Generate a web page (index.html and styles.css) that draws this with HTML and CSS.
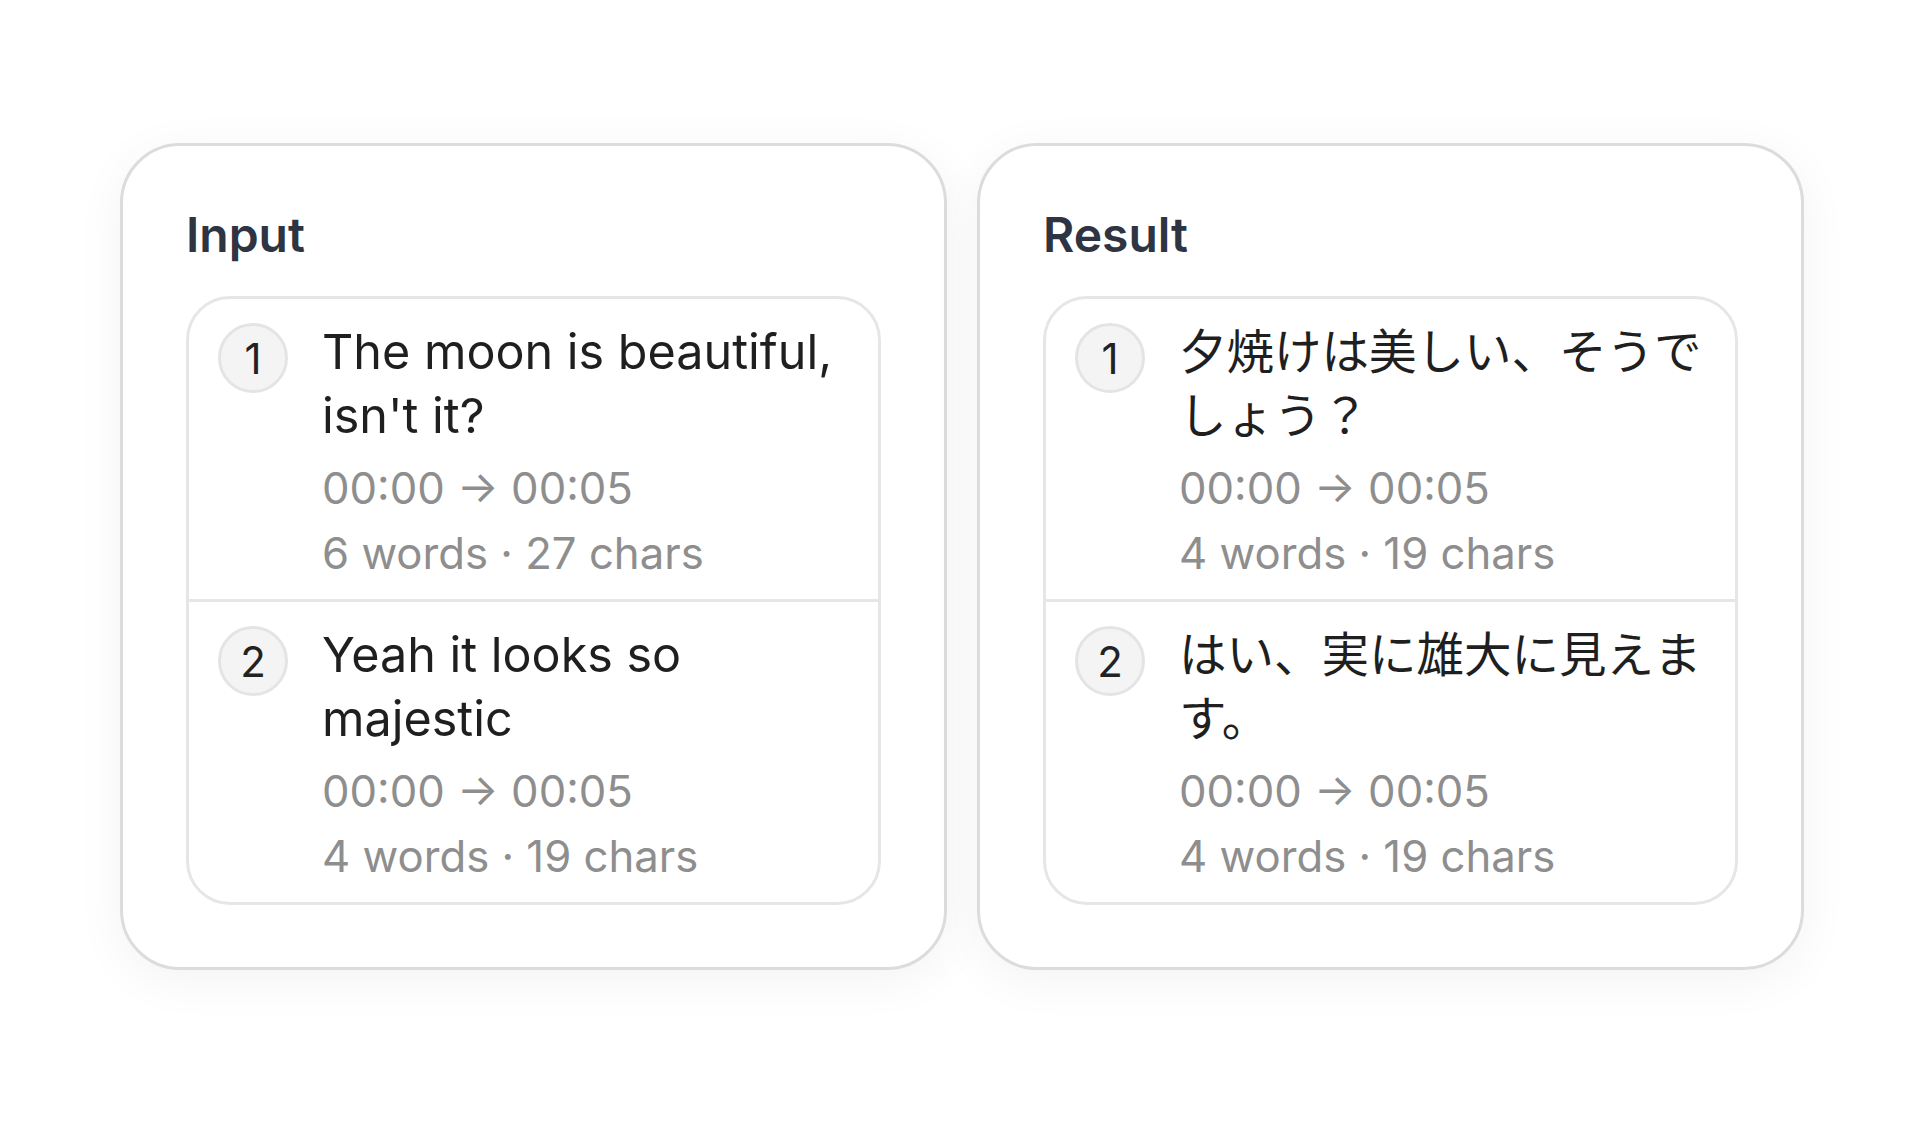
FILE: index.html
```html
<!DOCTYPE html>
<html lang="en">
<head>
<meta charset="utf-8">
<title>Input / Result</title>
<link rel="stylesheet" href="styles.css">
</head>
<body>
<main class="stage">
  <section class="card">
    <h2 class="title">Input</h2>
    <div class="list">
      <div class="row">
        <div class="badge">1</div>
        <div class="body">
          <div class="text">The moon is beautiful, isn't it?</div>
          <div class="meta">
            <div>00:00 → 00:05</div>
            <div>6 words · 27 chars</div>
          </div>
        </div>
      </div>
      <div class="row">
        <div class="badge">2</div>
        <div class="body">
          <div class="text">Yeah it looks so majestic</div>
          <div class="meta">
            <div>00:00 → 00:05</div>
            <div>4 words · 19 chars</div>
          </div>
        </div>
      </div>
    </div>
  </section>
  <section class="card">
    <h2 class="title">Result</h2>
    <div class="list">
      <div class="row">
        <div class="badge">1</div>
        <div class="body">
          <div class="text text-ja" lang="ja">夕焼けは美しい、そうでしょう？</div>
          <div class="meta">
            <div>00:00 → 00:05</div>
            <div>4 words · 19 chars</div>
          </div>
        </div>
      </div>
      <div class="row">
        <div class="badge">2</div>
        <div class="body">
          <div class="text text-ja" lang="ja">はい、実に雄大に見えます。</div>
          <div class="meta">
            <div>00:00 → 00:05</div>
            <div>4 words · 19 chars</div>
          </div>
        </div>
      </div>
    </div>
  </section>
</main>
</body>
</html>
```

FILE: styles.css
```css
html, body {
  margin: 0;
  padding: 0;
  background: #ffffff;
}

body {
  font-family: Inter, "Noto Sans CJK JP", sans-serif;
}

.stage {
  display: flex;
  justify-content: center;
  align-items: flex-start;
  gap: 30px;
  padding-top: 143px;
  min-height: 100vh;
  box-sizing: border-box;
}

.card {
  width: 827px;
  box-sizing: border-box;
  border: 3px solid #dcdcdc;
  border-radius: 60px;
  padding: 61px 63px 62px;
  background: #ffffff;
  box-shadow: 0 10px 50px rgba(0, 0, 0, 0.05);
}

.title {
  margin: 0 0 33px;
  font-size: 48px;
  line-height: 56px;
  font-weight: 600;
  color: #2e3441;
}

.list {
  border: 3px solid #e6e6e6;
  border-radius: 44px;
  overflow: hidden;
}

.row {
  display: flex;
  gap: 34px;
  padding: 21px 20px 13px 29px;
}

.row + .row {
  border-top: 3px solid #e6e6e6;
}

.badge {
  flex: none;
  width: 70px;
  height: 70px;
  box-sizing: border-box;
  margin-top: 3px;
  border: 3px solid #e4e4e4;
  border-radius: 50%;
  background: #f4f4f4;
  display: flex;
  align-items: center;
  justify-content: center;
  font-size: 42px;
  color: #222222;
}

.body {
  flex: 1;
  min-width: 0;
}

.text {
  font-size: 48.5px;
  line-height: 64px;
  color: #1f1f1f;
}

.text-ja {
  font-size: 47.5px;
}

.meta {
  margin-top: 8px;
  font-size: 43.7px;
  line-height: 65px;
  color: #8e8e8e;
}
```
